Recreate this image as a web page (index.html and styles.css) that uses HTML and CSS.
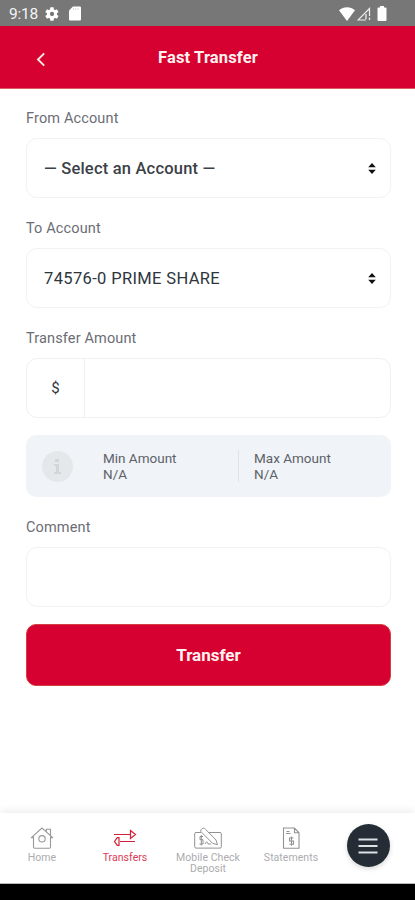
FILE: index.html
```html
<!DOCTYPE html>
<html lang="en">
<head>
<meta charset="utf-8">
<meta name="viewport" content="width=device-width, initial-scale=1">
<title>Fast Transfer</title>
<link rel="stylesheet" href="styles.css">
</head>
<body>
<div class="status">
  <span class="time">9:18</span>
  <svg class="gear" width="16" height="16" viewBox="0 0 24 24"><path fill="#fff" fill-rule="evenodd" d="M19.4 13a7.500 7.500 0 0 0 0-2l2.100-1.600a.5.5 0 0 0 .1-.7l-2-3.400a.5.5 0 0 0-.6-.2l-2.500 1a7.300 7.300 0 0 0-1.700-1L14.400 2.400A.5.5 0 0 0 13.900 2h-4a.5.5 0 0 0-.5.4L9 5.100a7.300 7.300 0 0 0-1.700 1l-2.500-1a.5.5 0 0 0-.6.2l-2 3.400a.5.5 0 0 0 .1.700L4.500 11a7.500 7.500 0 0 0 0 2l-2.200 1.600a.5.5 0 0 0-.1.700l2 3.400c.1.200.4.300.6.200l2.500-1a7.300 7.300 0 0 0 1.700 1l.4 2.700c0 .2.300.4.500.4h4c.3 0 .5-.2.500-.4l.4-2.700a7.300 7.300 0 0 0 1.700-1l2.500 1c.2.100.5 0 .6-.2l2-3.400a.5.5 0 0 0-.1-.7zM12 15.200a3.200 3.200 0 1 1 0-6.400 3.200 3.200 0 0 1 0 6.400z"/></svg>
  <svg class="card" width="12" height="15" viewBox="0 0 12 15"><path fill="#fff" d="M4 .5h7a1 1 0 0 1 1 1v12a1 1 0 0 1-1 1H1a1 1 0 0 1-1-1v-9z"/><path d="M4.500 2v2M6.800 2v2M9.100 2v2" stroke="#ccc" stroke-width=".7"/></svg>
  <svg class="wifi" width="16" height="14" viewBox="0 0 16 14"><path fill="#fff" d="M0 3.200C4.500-.8 11.500-.8 16 3.200L8 14z"/></svg>
  <svg class="signal" width="14" height="14" viewBox="0 0 14 14" fill="none" stroke="#eee"><path d="M9 13H1L12.500 1.500V9" stroke-width="1.200"/><path d="M9 7v5M12.500 10.500V13" stroke-width="1.300"/></svg>
  <svg class="battery" width="10" height="15" viewBox="0 0 10 15"><path fill="#fff" d="M3 0h4v1.500h1.500q1 0 1 1V14q0 1-1 1h-7q-1 0-1-1V2.500q0-1 1-1H3z"/></svg>
</div>
<header class="header">
  <svg class="back" width="10" height="15" viewBox="0 0 10 15" fill="none" stroke="#ffe9e6" stroke-width="1.900"><path d="M8.200 1.300 2 7.500l6.200 6.200"/></svg>
  <h1>Fast Transfer</h1>
</header>
<main class="form">
  <label class="label">From Account</label>
  <div class="field select"><span class="choice">— Select an Account —</span><svg width="8" height="11" viewBox="0 0 8 11"><path d="M4 0l3.800 4.300H.2zM4 11l3.800-4.300H.2z" fill="#111"/></svg></div>
  <label class="label">To Account</label>
  <div class="field select"><span class="choice share">74576-0 PRIME SHARE</span><svg width="8" height="11" viewBox="0 0 8 11"><path d="M4 0l3.800 4.300H.2zM4 11l3.800-4.300H.2z" fill="#111"/></svg></div>
  <label class="label">Transfer Amount</label>
  <div class="field amount"><span class="currency">$</span></div>
  <section class="limits">
    <svg class="info" width="31" height="31" viewBox="0 0 31 31"><circle cx="15.500" cy="15.500" r="15.500" fill="#e5e8eb"/><path d="M13 8h4v3h-4zM12 13h5v8h2v2h-7v-2h2v-6h-2z" fill="#d2d5d9"/></svg>
    <div class="limit min">Min Amount<br>N/A</div>
    <div class="limit max">Max Amount<br>N/A</div>
  </section>
  <label class="label">Comment</label>
  <div class="field comment"></div>
  <button class="submit">Transfer</button>
</main>
<nav class="nav">
  <a class="tab"><svg width="24" height="24" viewBox="0 0 24 24" fill="none" stroke="#999" stroke-width="1.100"><path d="M3.500 10.500V21q0 1.200 1.200 1.200h14.600q1.200 0 1.200-1.200V10.500M1 11.800 12 2l11 9.800M1 11.800h2.500M20.500 11.800H23M16.300 5.500V3.300h4.200v6"/><circle cx="12" cy="12.800" r="3.200"/></svg><span>Home</span></a>
  <a class="tab active"><svg width="24" height="24" viewBox="0 0 24 24" fill="none" stroke="#d32038" stroke-width="1.200"><path d="M1 8.500h16M17.500 4.500v8L22.500 8.500zM22 15.500H7M6 11.700v7.600H4.300L1.500 15.500 4.300 11.700z"/></svg><span>Transfers</span></a>
  <a class="tab"><svg width="30" height="24" viewBox="0 0 30 24" fill="none" stroke="#929292" stroke-width="1"><path d="M8 6.500H3Q1.700 6.500 1.700 7.800v13q0 1.300 1.300 1.300h24q1.300 0 1.300-1.300v-13q0-1.300-1.300-1.300H16"/><path d="M8 3.800q2.200-3.200 4.600-.4L23 14l1.500 4.700-4.800-1.300L9 6.700Q6.900 5.200 8 3.800zM12 18q2-4 3.200 0h3M10 10.500H7v3.200h3V18H6.500M8.300 9v10.500"/></svg><span>Mobile Check<br>Deposit</span></a>
  <a class="tab"><svg width="24" height="24" viewBox="0 0 24 24" fill="none" stroke="#929292" stroke-width="1.100"><path d="M4.500 2h11L20 6.800v15.400H4.500zM15.500 2v4.800H20M7.500 5.500h3M7 7.500h4.500M14.500 12h-4v3h4v3.200h-4M12.500 10.500v9.300"/></svg><span>Statements</span></a>
  <div class="menu-wrap"><button class="menu" aria-label="Menu"><svg width="20" height="18" viewBox="0 0 20 18"><path d="M.5 2.500h19M.5 9h19M.5 15.500h19" stroke="#dce0e3" stroke-width="2"/></svg></button></div>
</nav>
<div class="system"></div>
</body>
</html>
```
FILE: styles.css
```css
* { box-sizing: border-box; }
body { margin: 0; width: 415px; height: 900px; overflow: hidden; display: flex; flex-direction: column; background: #fff; font-family: Roboto, "Liberation Sans", sans-serif; color: #2e353d; }
svg { display: block; flex: none; }
.status { height: 26px; flex: none; background: #777; display: flex; align-items: center; padding: 1px 28px 0 9px; }
.time { color: #f5f5f5; font-size: 15.5px; width: 35px; letter-spacing: -.2px; }
.card { margin-left: 9px; }
.wifi { margin-left: auto; }
.signal { margin-left: 2px; }
.battery { margin-left: 6px; }
.header { height: 63px; flex: none; background: #d60031; border-bottom: 1px solid #dc5c63; display: grid; grid-template-columns: 49px 1fr 49px; align-items: center; }
.back { margin-left: 36px; margin-top: 4px; }
.header h1 { margin: 1px 0 0 1px; text-align: center; font-size: 16.5px; line-height: 20px; letter-spacing: .15px; font-weight: 700; color: #fff2ef; }
.form { flex: 1; padding: 20px 24px 0 26px; display: flex; flex-direction: column; }
.label { font-size: 14.5px; line-height: 20px; margin-bottom: 9px; color: #6b6d75; letter-spacing: .14px; }
.field { height: 60px; flex: none; border: 1.5px solid #f2f2f3; border-radius: 11px; margin-bottom: 21px; }
.select { display: flex; align-items: center; justify-content: space-between; padding: 0 14px 0 17px; }
.choice { font-size: 16.5px; font-weight: 500; white-space: nowrap; letter-spacing: .2px; color: #3b4147; }
.share { font-weight: 400; letter-spacing: .36px; color: #2e353d; }
.amount { display: flex; margin-bottom: 17px; border-color: #f0f0f1; }
.currency { width: 58px; border-right: 1px solid #eee; display: grid; place-items: center; font-size: 15px; }
.limits { height: 62px; flex: none; display: flex; align-items: center; background: #f0f4f8; border-radius: 10px; padding: 0 16px; margin-bottom: 21px; }
.limit { font-size: 13.5px; line-height: 16px; letter-spacing: 0; color: #5d6168; }
.min { width: 137px; margin-left: 30px; }
.max { border-left: 1px solid #dfe3e7; padding-left: 15px; margin-left: -2px; }
.comment { margin-bottom: 17px; }
.submit { height: 62px; flex: none; border: 1px solid #d33e40; border-radius: 10px; background: #d60031; color: #fff2ef; font: 700 17px/22px Roboto, sans-serif; padding: 0; }
.nav { height: 71px; flex: none; display: grid; grid-template-columns: repeat(5, 83px); background: #fff; border-bottom: 1px solid #bbb; box-shadow: 0 -3px 7px #00000010; }
.tab { display: flex; flex-direction: column; align-items: center; padding: 13px 0 0 1px; color: #acacae; font-size: 10.5px; line-height: 11px; text-align: center; letter-spacing: .05px; }
.tab span { margin-top: 2px; white-space: nowrap; }
.active { color: #da3b57; }
.menu-wrap { display: flex; justify-content: center; padding: 11px 11px 0 0; }
.menu { width: 43px; height: 43px; border: 0; border-radius: 50%; background: #242d36; display: grid; place-items: center; padding: 0; box-shadow: 0 2px 5px #00000028; }
.system { height: 16px; flex: none; background: #000; }
```
